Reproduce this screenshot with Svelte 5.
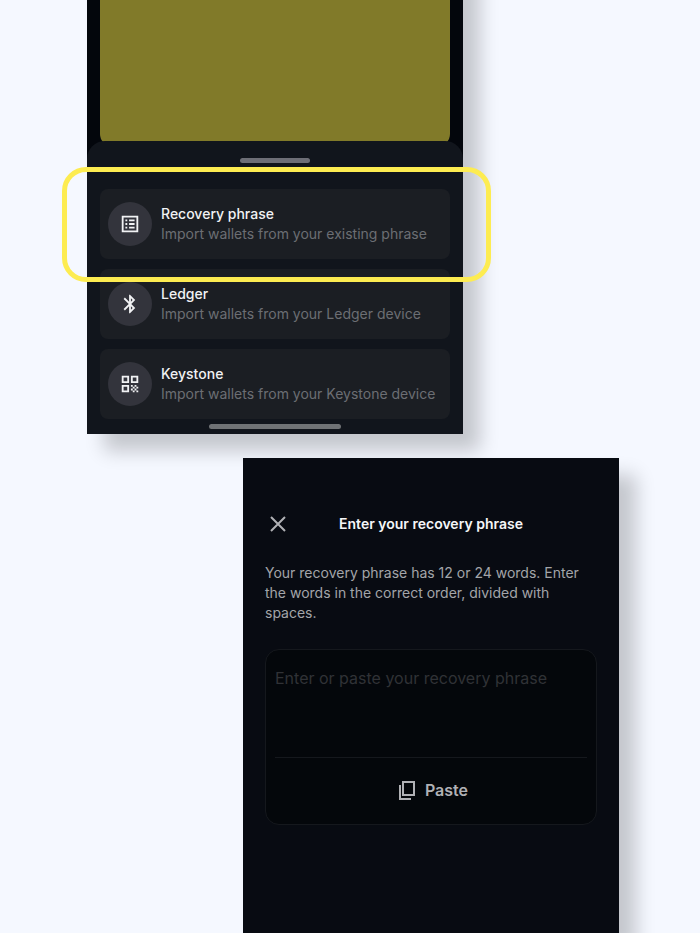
<script>
    let phrase = '';

    const wallets = [
        { name: 'Recovery phrase', info: 'Import wallets from your existing phrase', icon: 'list', marked: true },
        { name: 'Ledger', info: 'Import wallets from your Ledger device', icon: 'bluetooth' },
        { name: 'Keystone', info: 'Import wallets from your Keystone device', icon: 'qr' }
    ];
</script>

<main class="stage">
    <section class="phone import">
        <div class="banner"></div>
        <div class="sheet">
            <div class="grabber"></div>
            <ul class="wallets">
                {#each wallets as wallet}
                <li class="wallet">
                    <button class="option" type="button">
                        <span class="badge">
                            <svg width="22" height="22" viewBox="0 0 24 24" fill="currentColor" aria-hidden="true">
                                {#if wallet.icon === 'list'}
                                <path d="M19 5v14H5V5h14m2-2H3v18h18V3zM11 7h6v2h-6V7zm0 4h6v2h-6v-2zm0 4h6v2h-6v-2zM7 7h2v2H7V7zm0 4h2v2H7v-2zm0 4h2v2H7v-2z" />
                                {:else if wallet.icon === 'bluetooth'}
                                <path d="M17.71 7.71 12 2h-1v7.59L6.41 5 5 6.41 10.59 12 5 17.59 6.41 19 11 14.41V22h1l5.71-5.71L13.41 12l4.3-4.29zM13 5.83l1.88 1.88L13 9.59V5.83zm1.88 10.46L13 18.17v-3.76l1.88 1.88z" />
                                {:else}
                                <path d="M3 11h8V3H3v8zm2-6h4v4H5V5zM3 21h8v-8H3v8zm2-6h4v4H5v-4zM13 3v8h8V3h-8zm6 6h-4V5h4v4zM19 19h2v2h-2zM13 13h2v2h-2zM15 15h2v2h-2zM13 17h2v2h-2zM15 19h2v2h-2zM17 17h2v2h-2zM17 13h2v2h-2zM19 15h2v2h-2z" />
                                {/if}
                            </svg>
                        </span>
                        <span class="label">
                            <span class="name">{wallet.name}</span>
                            <span class="info">{wallet.info}</span>
                        </span>
                    </button>
                    {#if wallet.marked}
                    <div class="marker"></div>
                    {/if}
                </li>
                {/each}
            </ul>
            <div class="homebar"></div>
        </div>
    </section>

    <section class="phone entry">
        <header class="top">
            <button class="close" type="button" aria-label="Close">
                <svg width="16" height="16" viewBox="0 0 16 16" fill="none" stroke="currentColor" stroke-width="2" aria-hidden="true">
                    <path d="M1 1l14 14M15 1L1 15" />
                </svg>
            </button>
            <h1>Enter your recovery phrase</h1>
        </header>
        <p>Your recovery phrase has 12 or 24 words. Enter the words in the correct order, divided with spaces.</p>
        <div class="box">
            <textarea aria-label="Recovery phrase" placeholder="Enter or paste your recovery phrase" bind:value={phrase}></textarea>
            <button class="paste" type="button">
                <svg width="24" height="24" viewBox="0 0 24 24" fill="none" stroke="currentColor" stroke-width="2" aria-hidden="true">
                    <path d="M9 4h11v13H9zM6 7v14h11" />
                </svg>
                Paste
            </button>
        </div>
    </section>
</main>

<style>
:global(body) {
    margin: 0;
    background: #f5f8ff;
}
.stage {
    display: flex;
    flex-direction: column;
    gap: 24px;
    box-sizing: border-box;
    min-height: 100vh;
    padding: 0 81px 0 87px;
    overflow: hidden;
    font-family: Inter, "Liberation Sans", sans-serif;
    font-size: 14px;
    line-height: 20px;
}
button {
    border: 0;
    padding: 0;
    background: none;
    font: inherit;
    cursor: pointer;
}
svg {
    display: block;
}
.phone {
    box-shadow: 17px 17px 18px rgba(0, 0, 0, 0.2);
}
/* the top of this phone runs off the page */
.import {
    margin-top: -60px;
    margin-right: 156px;
    background: #03060c;
}
.banner {
    height: 206px;
    margin: 0 13px;
    border-radius: 0 0 12px 12px;
    background: #817a29;
}
.sheet {
    position: relative;
    margin-top: -5px;
    padding: 17px 13px 5px;
    border-radius: 18px 18px 0 0;
    background: #11151c;
}
.grabber {
    width: 70px;
    height: 5px;
    margin: 0 auto 26px;
    border-radius: 3px;
    background: #6d6e76;
}
.wallets {
    display: flex;
    flex-direction: column;
    gap: 10px;
    margin: 0;
    padding: 0;
    list-style: none;
}
.wallet {
    position: relative;
}
.option {
    display: flex;
    align-items: center;
    gap: 9px;
    width: 100%;
    min-height: 70px;
    padding: 0 8px;
    border-radius: 8px;
    background: #1b1e23;
    text-align: left;
}
.badge {
    display: flex;
    align-items: center;
    justify-content: center;
    width: 44px;
    height: 44px;
    border-radius: 50%;
    background: #33343c;
    color: #f1f2f4;
}
.label {
    display: flex;
    flex-direction: column;
}
.name {
    color: #f1f2f4;
    font-weight: 500;
}
.info {
    color: #6c6e73;
}
.marker {
    position: absolute;
    z-index: 1;
    inset: -22px -41px -23px -38px;
    border: 5px solid #fdec51;
    border-radius: 24px;
    pointer-events: none;
}
.homebar {
    width: 132px;
    height: 5px;
    margin: 5px auto 0;
    border-radius: 3px;
    background: #6f7275;
}
.entry {
    flex: 1;
    margin-left: 156px;
    padding: 54px 22px 0;
    background: #080b12;
}
.top {
    display: grid;
    grid-template-columns: 24px 1fr 24px;
    align-items: center;
}
.close {
    justify-self: end;
    padding: 4px 3px;
    color: #b0b1b5;
}
h1 {
    margin: 0;
    color: #f5f6f8;
    font-size: 14px;
    font-weight: 600;
    text-align: center;
}
p {
    margin: 27px 0 26px;
    color: #a3a5a9;
}
.box {
    padding: 0 9px 2px;
    border: 1px solid #15181d;
    border-radius: 14px;
    background: #04070b;
}
textarea {
    display: block;
    box-sizing: border-box;
    width: 100%;
    height: 108px;
    padding: 18px 0 0;
    border: 0;
    border-bottom: 1px solid #15181d;
    outline: 0;
    resize: none;
    background: none;
    color: #f1f2f4;
    font: inherit;
    font-size: 16px;
}
textarea::placeholder {
    color: #303236;
    opacity: 1;
}
.paste {
    display: flex;
    align-items: center;
    justify-content: center;
    gap: 7px;
    width: 100%;
    height: 64px;
    color: #b0b1b5;
    font-size: 16px;
    font-weight: 600;
}
</style>
